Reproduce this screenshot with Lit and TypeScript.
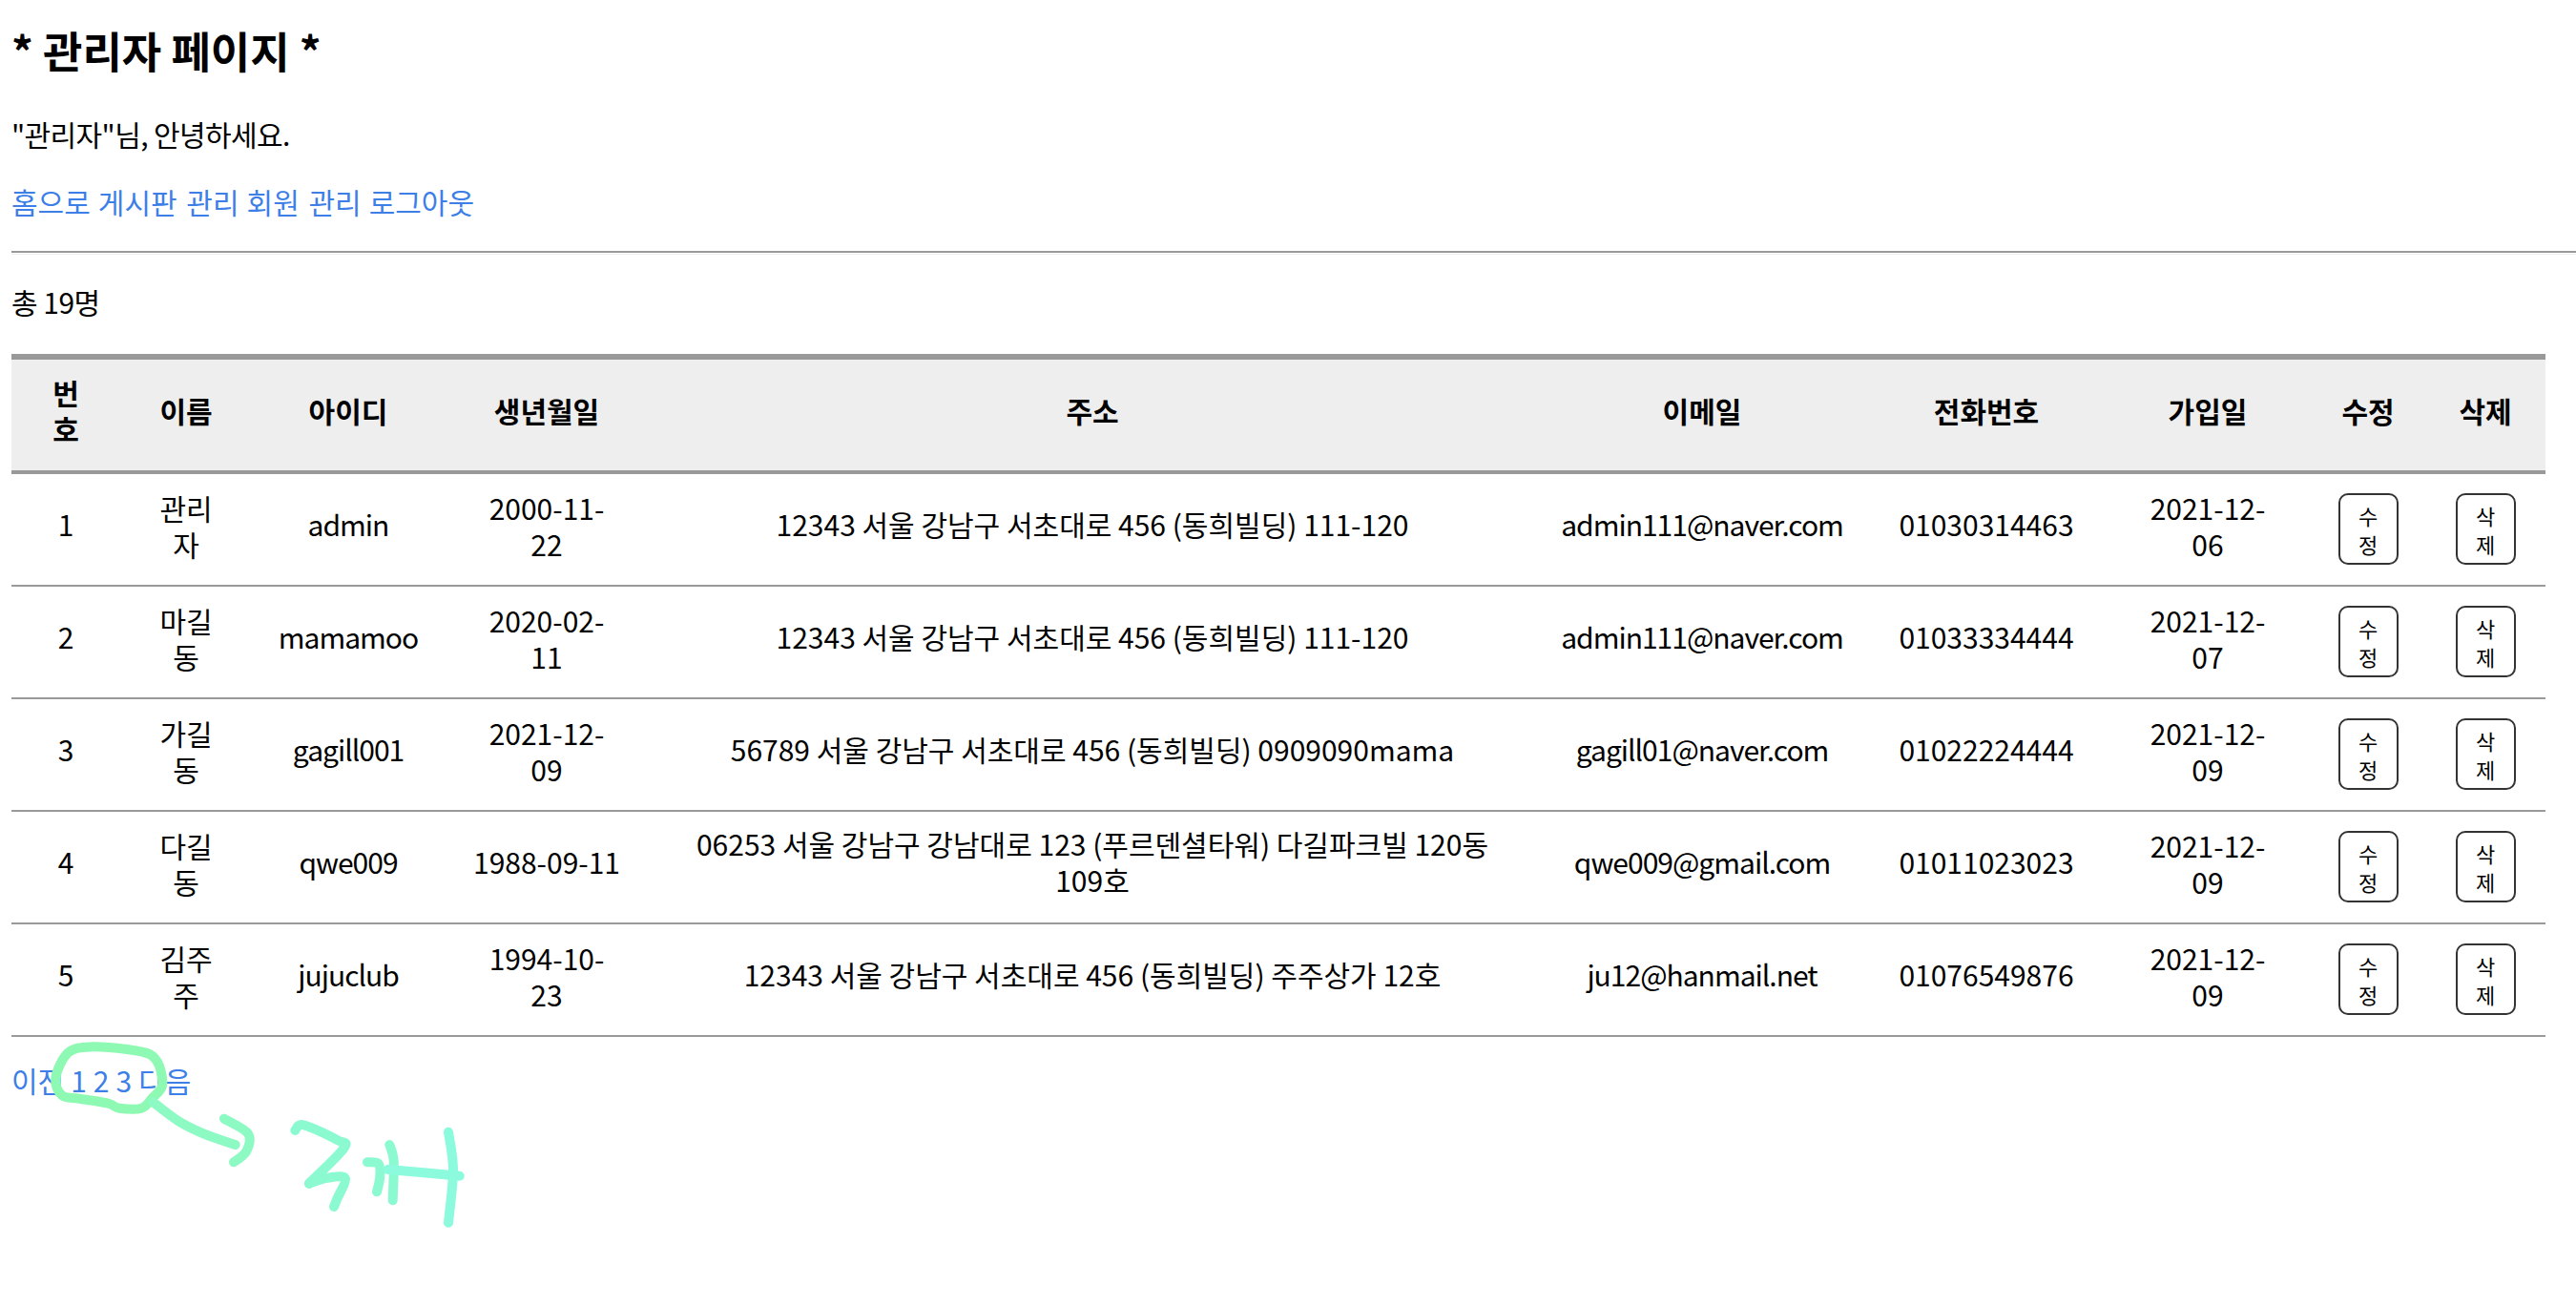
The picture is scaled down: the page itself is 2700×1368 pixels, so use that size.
import { LitElement, html, css, svg } from "lit";
import { customElement } from "lit/decorators.js";

interface Member { no: number; name: string; id: string; birth: string; birthOneLine?: boolean; addr: string; mail: string; tel: string; join: string; }

const members: Member[] = [
  { no: 1, name: "관리자", id: "admin", birth: "2000-11-22", addr: "12343 서울 강남구 서초대로 456 (동희빌딩) 111-120", mail: "admin111@naver.com", tel: "01030314463", join: "2021-12-06" },
  { no: 2, name: "마길동", id: "mamamoo", birth: "2020-02-11", addr: "12343 서울 강남구 서초대로 456 (동희빌딩) 111-120", mail: "admin111@naver.com", tel: "01033334444", join: "2021-12-07" },
  { no: 3, name: "가길동", id: "gagill001", birth: "2021-12-09", addr: "56789 서울 강남구 서초대로 456 (동희빌딩) 0909090mama", mail: "gagill01@naver.com", tel: "01022224444", join: "2021-12-09" },
  { no: 4, name: "다길동", id: "qwe009", birth: "1988-09-11", birthOneLine: true, addr: "06253 서울 강남구 강남대로 123 (푸르덴셜타워) 다길파크빌 120동 109호", mail: "qwe009@gmail.com", tel: "01011023023", join: "2021-12-09" },
  { no: 5, name: "김주주", id: "jujuclub", birth: "1994-10-23", addr: "12343 서울 강남구 서초대로 456 (동희빌딩) 주주상가 12호", mail: "ju12@hanmail.net", tel: "01076549876", join: "2021-12-09" },
];

const headers = ["번호", "이름", "아이디", "생년월일", "주소", "이메일", "전화번호", "가입일", "수정", "삭제"];
const colClasses = ["c1", "c2", "c3", "c4", "c5", "c6", "c7", "c8", "c9", "c10"];

/* Catmull-Rom through the sampled pen points (sampled on a 3x crop, offset 1060px down). */
const z = (raw: number[][]) => {
  const p = raw.map(([x, y]) => [x / 3, y / 3 + 1060]);
  const at = (i: number) => p[Math.max(0, Math.min(p.length - 1, i))];
  let d = `M${p[0][0].toFixed(1)} ${p[0][1].toFixed(1)}`;
  for (let i = 0; i < p.length - 1; i++) {
    const [a, b, c, e] = [at(i - 1), at(i), at(i + 1), at(i + 2)];
    const c1 = [b[0] + (c[0] - a[0]) / 6, b[1] + (c[1] - a[1]) / 6];
    const c2 = [c[0] - (e[0] - b[0]) / 6, c[1] - (e[1] - b[1]) / 6];
    d += ` C${c1[0].toFixed(1)} ${c1[1].toFixed(1)} ${c2[0].toFixed(1)} ${c2[1].toFixed(1)} ${c[0].toFixed(1)} ${c[1].toFixed(1)}`;
  }
  return d;
};

@customElement("app-root")
export class AppRoot extends LitElement {
  static styles = css`
    :host {
      display: block;
      position: relative;
      min-height: 1368px;
      padding: 28px 0 0 12px;
      box-sizing: border-box;
      font-family: "Noto Sans CJK KR", "Noto Sans", sans-serif;
      font-size: 30px;
      line-height: 38px;
      color: #000;
      background: #fff;
    }
    h1 { margin: 0; font-size: 45px; line-height: 50px; font-weight: 700; }
    p { margin: 0; }
    .hello { margin-top: 43px; letter-spacing: -0.6px; }
    .nav { margin-top: 33px; display: flex; gap: 8px; word-spacing: 3px; }
    a { color: #3d7fe6; text-decoration: none; }
    hr { margin: 33px 0 0; height: 1px; border: none; border-top: 2px solid #999; border-bottom: 1px solid #eee; }
    .total { margin-top: 30px; letter-spacing: -0.5px; }
    table {
      margin-top: 36px;
      width: 2656px;
      table-layout: fixed;
      border-collapse: separate;
      border-spacing: 0;
      border-top: 6px solid #999;
      text-align: center;
    }
    th {
      background: #eee;
      height: 106px;
      padding: 0 0 10px;
      font-weight: 700;
      border-bottom: 4px solid #999;
    }
    td {
      height: 116px;
      padding: 0;
      border-bottom: 2px solid #999;
    }
    th, td { box-sizing: content-box; vertical-align: middle; }
    .cell { padding: 0 8px 12px; word-break: keep-all; }
    .tight { letter-spacing: -1px; }
    .addr { padding: 0 30px 12px; word-break: keep-all; }
    .narrow { padding: 0 36px; word-break: break-all; }
    td .narrow { padding-bottom: 9px; }
    .date { padding: 0 32px 9px; }
    .one-line { padding: 0 0 12px; white-space: nowrap; }
    .c1 { width: 114px; } .c2 { width: 138px; } .c3 { width: 202px; } .c4 { width: 214px; }
    .c5 { width: 930px; } .c6 { width: 348px; } .c7 { width: 248px; } .c8 { width: 216px; }
    .c9 { width: 120px; } .c10 { width: 126px; }
    .btn {
      display: block;
      margin: 0 auto 2px;
      width: 63px;
      height: 75px;
      box-sizing: border-box;
      padding: 6px 12px;
      border: 2px solid #333;
      border-radius: 10px;
      background: #fff;
      font: inherit;
      font-size: 22px;
      line-height: 30px;
      color: #000;
    }
    .pager { margin-top: 26px; display: flex; gap: 7px; }
    .ink { position: absolute; inset: 0; width: 2700px; height: 1368px; pointer-events: none; }
    .ink path { fill: none; stroke-width: 10; stroke-linecap: round; stroke-linejoin: round; }
    .s1 { stroke: #8ef9b2; } .s2 { stroke: #8dfac4; } .s3 { stroke: #8cfad0; } .s4 { stroke: #8bfadd; }
  `;

  private cellHtml(m: Member) {
    return html`
      <td><div class="cell">${m.no}</div></td>
      <td><div class="narrow">${m.name}</div></td>
      <td><div class="cell tight">${m.id}</div></td>
      <td><div class=${m.birthOneLine ? "one-line" : "date"}>${m.birth}</div></td>
      <td><div class="addr">${m.addr}</div></td>
      <td><div class="cell tight">${m.mail}</div></td>
      <td><div class="cell">${m.tel}</div></td>
      <td><div class="date">${m.join}</div></td>
      <td><button class="btn">수정</button></td>
      <td><button class="btn">삭제</button></td>
    `;
  }

  render() {
    return html`
      <h1>* 관리자 페이지 *</h1>
      <p class="hello">"관리자"님, 안녕하세요.</p>
      <div class="nav">
        <a href="#">홈으로</a><a href="#">게시판 관리</a><a href="#">회원 관리</a><a href="#">로그아웃</a>
      </div>
      <hr />
      <p class="total">총 19명</p>
      <table>
        <colgroup>${colClasses.map((c) => html`<col class=${c} />`)}</colgroup>
        <thead>
          <tr>${headers.map((h, i) => html`<th><div class=${i === 0 ? "narrow" : ""}>${h}</div></th>`)}</tr>
        </thead>
        <tbody>
          ${members.map((m) => html`<tr>${this.cellHtml(m)}</tr>`)}
        </tbody>
      </table>
      <div class="pager">
        <a href="#">이전</a><a href="#">1</a><a href="#">2</a><a href="#">3</a><a href="#">다음</a>
      </div>
      <svg class="ink" viewBox="0 0 2700 1368" aria-hidden="true">
        ${svg`
          <path class="s1" d=${z([[480,272],[445,305],[375,305],[340,290],[250,275],[195,265],[175,210],[215,130],[290,112],[400,120],[470,135],[500,170],[510,235],[480,272]])}></path>
          <path class="s2" d=${z([[480,285],[560,345],[640,385],[740,420]])}></path>
          <path class="s2" d=${z([[705,338],[780,385],[775,440],[735,475]])}></path>
          <path class="s3" d=${z([[928,375],[955,358],[1060,405],[1082,430],[972,542]])}></path>
          <path class="s3" d=${z([[972,542],[1025,525],[1085,525],[1060,590],[1050,615]])}></path>
          <path class="s3" d=${z([[1155,475],[1190,480],[1195,520],[1185,568]])}></path>
          <path class="s3" d=${z([[1225,420],[1238,470],[1235,595]])}></path>
          <path class="s4" d=${z([[1220,498],[1445,518]])}></path>
          <path class="s4" d=${z([[1410,380],[1425,500],[1410,665]])}></path>
        `}
      </svg>
    `;
  }
}
